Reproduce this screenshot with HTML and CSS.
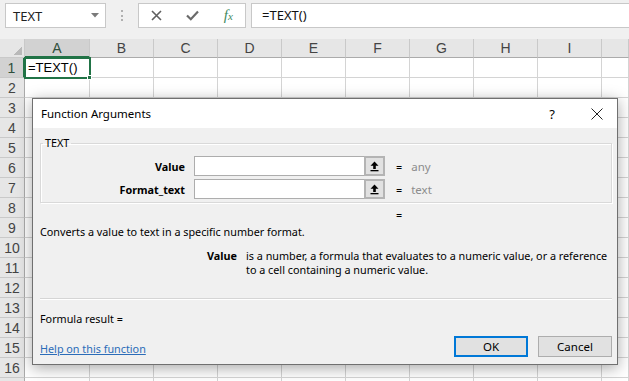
FILE: index.html
```html
<!DOCTYPE html>
<html lang="en">
<head>
    <meta charset="UTF-8">
    <title>Function Arguments</title>
    <link rel="stylesheet" href="styles.css">
</head>
<body>

    <!-- barra de fórmulas -->
    <div class="toolbar">
        <div class="namebox">
            <span>TEXT</span>
            <svg width="8" height="5" viewBox="0 0 8 5"><polygon points="0,0 8,0 4,4.5" fill="#7a7a7a"/></svg>
        </div>
        <div class="grip"><span></span></div>
        <div class="fxbox">
            <svg width="11" height="11" viewBox="0 0 11 11"><path d="M1 1 L10 10 M10 1 L1 10" stroke="#5f5f5f" stroke-width="1.6"/></svg>
            <svg width="13" height="11" viewBox="0 0 13 11"><path d="M1 5.5 L4.8 9.2 L12 1.5" stroke="#6a6a6a" stroke-width="2.2" fill="none"/></svg>
            <span class="fx">f<small>x</small></span>
        </div>
        <div class="formula">=TEXT()</div>
    </div>

    <!-- planilha -->
    <div class="sheet">
        <div class="grid" id="grid"></div>

        <div class="dialog">
            <div class="dlg-title">
                <span class="name">Function Arguments</span>
                <span class="help">?</span>
                <svg class="close" width="12" height="12" viewBox="0 0 12 12"><path d="M0.5 0.5 L11.5 11.5 M11.5 0.5 L0.5 11.5" stroke="#222" stroke-width="1"/></svg>
            </div>

            <div class="dlg-body">
                <fieldset class="args">
                    <legend>TEXT</legend>
                    <div class="arg">
                        <label for="value">Value</label>
                        <input type="text" id="value">
                        <button class="ref" type="button">
                            <svg width="9" height="11" viewBox="0 0 9 11"><path d="M4.5 0.5 L0.5 4.8 H3.2 V8 H5.8 V4.8 H8.5 Z" fill="#000"/><rect x="0.5" y="9" width="8" height="1.3" fill="#000"/></svg>
                        </button>
                        <span class="eq">=</span>
                        <span class="hint">any</span>
                    </div>
                    <div class="arg">
                        <label for="format_text">Format_text</label>
                        <input type="text" id="format_text">
                        <button class="ref" type="button">
                            <svg width="9" height="11" viewBox="0 0 9 11"><path d="M4.5 0.5 L0.5 4.8 H3.2 V8 H5.8 V4.8 H8.5 Z" fill="#000"/><rect x="0.5" y="9" width="8" height="1.3" fill="#000"/></svg>
                        </button>
                        <span class="eq">=</span>
                        <span class="hint">text</span>
                    </div>
                </fieldset>

                <div class="result-eq">=</div>
                <p class="desc">Converts a value to text in a specific number format.</p>

                <div class="argdesc">
                    <b>Value</b>
                    <p>is a number, a formula that evaluates to a numeric value, or a reference<br>to a cell containing a numeric value.</p>
                </div>

                <hr>

                <div class="result">Formula result =</div>

                <div class="footer">
                    <a href="#">Help on this function</a>
                    <button class="ok" type="button">OK</button>
                    <button type="button">Cancel</button>
                </div>
            </div>
        </div>
    </div>

    <script>
        // monta a grade de células
        const grid = document.getElementById("grid");
        const cols = ["A", "B", "C", "D", "E", "F", "G", "H", "I", ""];

        function cell(cls, text) {
            const d = document.createElement("div");
            d.className = cls;
            d.textContent = text || "";
            grid.appendChild(d);
            return d;
        }

        cell("corner");
        cols.forEach((c, i) => cell(i === 0 ? "colhead sel" : "colhead", c));

        for (let r = 1; r <= 17; r++) {
            // a linha 17 só aparece cortada, sem número
            cell(r === 1 ? "rowhead sel" : "rowhead", r < 17 ? r : "");
            cols.forEach((c, i) => {
                if (r === 1 && i === 0) {
                    const a1 = cell("cell active", "=TEXT()");
                    a1.appendChild(document.createElement("i"));
                } else {
                    cell("cell");
                }
            });
        }
    </script>

</body>
</html>
```

FILE: styles.css
```css
* {
    box-sizing: border-box;
}

body {
    margin: 0;
    width: 629px;
    height: 381px;
    overflow: hidden;
    background: #fff;
    font-family: "Noto Sans", sans-serif;
    color: #000;
}

/* barra de fórmulas */
.toolbar {
    display: flex;
    height: 39px;
    padding: 3px 0 0 5px;
    background: #f0f0f0;
}

.namebox {
    display: flex;
    align-items: center;
    justify-content: space-between;
    width: 101px;
    height: 25px;
    padding: 0 6px 0 7px;
    background: #fff;
    border: 1px solid #c8c8c8;
    font-size: 13px;
    color: #222;
}

.grip {
    display: flex;
    align-items: center;
    justify-content: center;
    width: 32px;
    height: 25px;
}

.grip span {
    width: 2px;
    height: 11px;
    background: repeating-linear-gradient(#b0b0b0 0 2px, transparent 2px 4.5px);
}

.fxbox {
    display: flex;
    align-items: center;
    justify-content: space-around;
    width: 108px;
    height: 25px;
    background: #fff;
    border: 1px solid #c8c8c8;
}

.fx {
    font-family: "Liberation Serif", serif;
    font-style: italic;
    font-size: 15px;
    color: #3f8a5f;
}

.fx small {
    font-size: 11px;
}

.formula {
    flex: 1;
    height: 25px;
    margin-left: 5px;
    padding-left: 10px;
    background: #fff;
    border: 1px solid #c8c8c8;
    border-right: none;
    font-size: 13px;
    line-height: 23px;
    color: #111;
}

/* planilha */
.sheet {
    position: relative;
}

.grid {
    display: grid;
    grid-template-columns: 25px 65px repeat(8, 64px) 1fr;
    grid-template-rows: 19px;
    grid-auto-rows: 20px;
    font-family: "Liberation Sans", sans-serif;
}

.grid div {
    border-right: 1px solid #d4d4d4;
    border-bottom: 1px solid #d4d4d4;
}

.corner {
    background: #e6e6e6 linear-gradient(135deg, transparent 62%, #b9b9b9 62%) no-repeat 11px 5px / 11px 11px;
}

.grid .colhead,
.grid .rowhead,
.grid .corner {
    background-color: #e6e6e6;
    border-color: #c9c9c9;
    color: #444;
    font-size: 14px;
    text-align: center;
}

.grid .colhead {
    line-height: 18px;
    border-bottom-color: #ababab;
}

.grid .rowhead {
    line-height: 20px;
    border-right-color: #ababab;
}

.grid .colhead.sel {
    background: #d2d2d2;
    border-bottom: 2px solid #217346;
    color: #2f4f3c;
}

.grid .rowhead.sel {
    background: #d2d2d2;
    border-right: 2px solid #217346;
    color: #2f4f3c;
}

.cell.active {
    position: relative;
    outline: 2px solid #217346;
    outline-offset: -1px;
    padding-left: 3px;
    font-size: 13px;
    line-height: 19px;
    z-index: 1;
}

.cell.active i {
    position: absolute;
    right: -3px;
    bottom: -3px;
    width: 5px;
    height: 5px;
    background: #217346;
    border: 1px solid #fff;
}

/* janela de argumentos */
.dialog {
    position: absolute;
    left: 32px;
    top: 59px;
    z-index: 2;
    width: 586px;
    height: 267px;
    background: #f0f0f0;
    border: 1px solid #707070;
    box-shadow: 0 3px 14px rgba(0, 0, 0, 0.35);
    font-size: 10.8px;
}

.dlg-title {
    display: flex;
    align-items: center;
    height: 29px;
    padding: 0 14px 0 8px;
    background: #fff;
    font-size: 11.5px;
}

.dlg-title .name {
    flex: 1;
}

.help {
    margin-right: 36px;
    font-size: 13px;
}

.dlg-body {
    padding: 0 5px 0 7px;
}

.args {
    margin: 8px 0 0;
    padding: 6px 0 3px;
    border: 1px solid #d9d9d9;
    box-shadow: 1px 1px 0 #fff, inset 1px 1px 0 #fff;
}

legend {
    margin-left: 2px;
    padding: 0 2px;
    line-height: 14px;
    font-size: 10.8px;
}

.arg {
    display: flex;
    align-items: center;
    height: 20px;
    margin-bottom: 3px;
}

.arg:last-child {
    margin-bottom: 0;
}

.arg label {
    width: 144px;
    margin-right: 9px;
    text-align: right;
    font-weight: bold;
}

.arg input {
    width: 170px;
    height: 20px;
    margin: 0;
    border: 1px solid #adadad;
    border-right: none;
    background: #fff;
}

.ref {
    display: flex;
    align-items: center;
    justify-content: center;
    width: 21px;
    height: 20px;
    padding: 0;
    background: #e1e1e1;
    border: 2px solid #b4b4b4;
}

.eq {
    margin-left: 11px;
}

.hint {
    margin-left: 9px;
    font-size: 11.5px;
    color: #8c8c8c;
}

.result-eq {
    margin-top: 5px;
    padding-left: 356px;
    line-height: 14px;
}

.desc {
    margin: 3px 0 0;
    line-height: 14px;
}

.argdesc {
    display: grid;
    grid-template-columns: 197px 1fr;
    column-gap: 9px;
    margin-top: 10px;
    line-height: 13.5px;
}

.argdesc b {
    text-align: right;
}

.argdesc p {
    margin: 0;
    white-space: nowrap;
}

hr {
    margin: 22px 0 0;
    border: none;
    border-top: 1px solid #d5d5d5;
    border-bottom: 1px solid #fff;
}

.result {
    margin-top: 12px;
    line-height: 14px;
}

.footer {
    display: flex;
    align-items: center;
    margin-top: 10px;
}

.footer a {
    flex: 1;
    padding-top: 3px;
    color: #2b6cb8;
}

.footer button {
    width: 74px;
    height: 21px;
    margin-left: 10px;
    padding: 0;
    background: #e1e1e1;
    border: 1px solid #adadad;
    font-family: inherit;
    font-size: 11.5px;
}

.footer button.ok {
    border: 2px solid #0078d7;
}
```
